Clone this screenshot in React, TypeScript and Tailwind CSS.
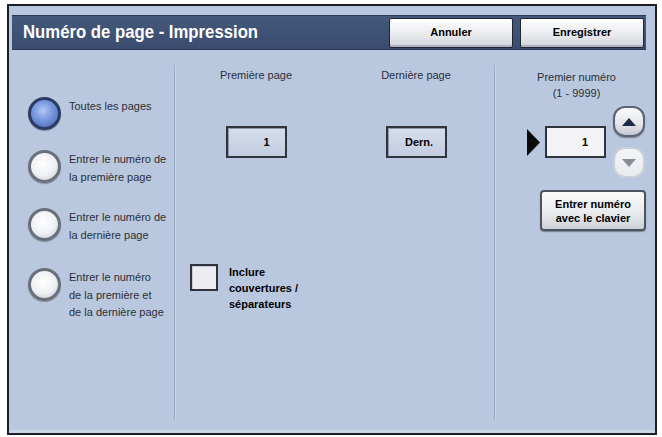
const sans = "font-['Liberation_Sans',Arial,sans-serif]";

function Radio({ on }: { on?: boolean }) {
  return (
    <div
      className={`h-[33px] w-[33px] shrink-0 rounded-full border-[3px] shadow-[0_1px_1px_rgba(0,0,0,0.3)] ${
        on
          ? 'border-[#2b3b63] bg-[radial-gradient(circle_at_45%_40%,#b3c7f3_0%,#7595de_45%,#4562ad_100%)]'
          : 'border-[#6a707b] bg-[radial-gradient(circle_at_45%_40%,#ffffff_0%,#eef0f3_55%,#b8bdc6_100%)]'
      }`}
    />
  );
}

function Option({ on, lines, mt }: { on?: boolean; lines: string[]; mt: string }) {
  return (
    <div className={`flex items-start gap-[8px] ${mt}`}>
      <Radio on={on} />
      <div className="pt-[1px] text-[11px] leading-[17.5px] text-[#2b2f38]">
        {lines.map((l) => (
          <div key={l}>{l}</div>
        ))}
      </div>
    </div>
  );
}

function Field({ value, center }: { value: string; center?: boolean }) {
  return (
    <div
      className={`flex h-[32px] w-[61px] items-center border-2 border-[#30343d] bg-[linear-gradient(180deg,#d6deeb,#c3cde0)] shadow-[inset_1px_1px_0_#8e99ad] text-[11px] font-bold text-black ${
        center ? 'justify-center pl-[6px]' : 'justify-end pr-[15px]'
      }`}
    >
      {value}
    </div>
  );
}

function Divider() {
  return (
    <div className="mt-[15px] mb-[11px] flex w-[2px] shrink-0">
      <div className="w-px bg-[#9aaac3]" />
      <div className="w-px bg-[#cbd6e6]" />
    </div>
  );
}

function HeaderButton({ label }: { label: string }) {
  return (
    <div className="flex h-[30px] w-[124px] items-center justify-center rounded-[2px] border border-[#1f2534] bg-[linear-gradient(180deg,#ffffff,#e6e8ec_60%,#cfd3da)] shadow-[inset_0_-2px_0_#aeb4bf] text-[11px] font-bold text-black">
      {label}
    </div>
  );
}

export default function App() {
  return (
    <div className={`h-[437px] w-[662px] bg-white pl-[7px] pt-[4px] ${sans}`}>
      <div className="flex h-[431px] w-[650px] flex-col border-2 border-[#1b1e25] bg-[#b9c8de]">
        {/* title bar */}
        <div className="ml-[3px] mr-[9px] mt-[9px] flex h-[35px] items-center border-y border-[#2c3a55] bg-[linear-gradient(180deg,#44587a,#3a4d6e)] pl-[11px] pr-[2px]">
          <div className="flex-1">
            <div className="origin-left scale-x-[0.88] whitespace-nowrap text-[19px] font-bold text-white">
              Numéro de page - Impression
            </div>
          </div>
          <div className="flex gap-[7px]">
            <HeaderButton label="Annuler" />
            <HeaderButton label="Enregistrer" />
          </div>
        </div>

        {/* body */}
        <div className="flex flex-1 border-b-[3px] border-[#cad5e6]">
          {/* left column: radios */}
          <div className="w-[165px] shrink-0 pl-[19px]">
            <Option on lines={['Toutes les pages']} mt="mt-[47px]" />
            <Option lines={['Entrer le numéro de', 'la première page']} mt="mt-[20px]" />
            <Option lines={['Entrer le numéro de', 'la dernière page']} mt="mt-[22px]" />
            <Option
              lines={['Entrer le numéro', 'de la première et', 'de la dernière page']}
              mt="mt-[24px]"
            />
          </div>

          <Divider />

          {/* middle column */}
          <div className="w-[318px] shrink-0">
            <div className="flex pt-[19px]">
              <div className="flex w-[160px] shrink-0 flex-col items-center">
                <div className="text-[11px] leading-[13px] text-[#2b2f38]">Première page</div>
                <div className="mt-[44px]">
                  <Field value="1" />
                </div>
              </div>
              <div className="flex w-[160px] shrink-0 flex-col items-center">
                <div className="text-[11px] leading-[13px] text-[#2b2f38]">Dernière page</div>
                <div className="mt-[44px]">
                  <Field value="Dern." center />
                </div>
              </div>
            </div>
            <div className="ml-[14px] mt-[106px] flex items-start gap-[11px]">
              <div className="h-[27px] w-[28px] shrink-0 border-2 border-[#2d323c] bg-[#ececf1] shadow-[inset_1px_1px_0_#c9ccd4]" />
              <div className="text-[11px] font-bold leading-[16px] text-black">
                <div>Inclure</div>
                <div>couvertures /</div>
                <div>séparateurs</div>
              </div>
            </div>
          </div>

          <Divider />

          {/* right column */}
          <div className="flex-1">
            <div className="pl-[2px] pt-[19px] text-center text-[11px] leading-[16px] text-[#2b2f38]">
              <div>Premier numéro</div>
              <div>(1 - 9999)</div>
            </div>
            <div className="mt-[5px] flex items-center pl-[31px]">
              <svg width="13" height="27" viewBox="0 0 13 27" className="shrink-0">
                <polygon points="0,0 13,13.5 0,27" fill="#0b0b0d" />
              </svg>
              <div className="ml-[5px] flex h-[32px] w-[61px] shrink-0 items-center justify-end border-2 border-[#30343d] bg-[#f3f3f6] pr-[16px] text-[11px] font-bold text-black">
                1
              </div>
              <div className="ml-[7px] flex flex-col gap-[10px]">
                <div className="flex h-[31px] w-[32px] items-center justify-center rounded-[12px] border-2 border-[#5c6372] bg-[linear-gradient(180deg,#fbfbfc,#e4e6ea_60%,#c3c7cf)] shadow-[0_1px_1px_rgba(0,0,0,0.35)]">
                  <svg width="14" height="8" viewBox="0 0 14 8">
                    <polygon points="7,0 14,8 0,8" fill="#1e2a47" />
                  </svg>
                </div>
                <div className="flex h-[31px] w-[32px] items-center justify-center rounded-[12px] border-2 border-[#c9cfd9] bg-[linear-gradient(180deg,#f4f5f7,#e8eaee)]">
                  <svg width="14" height="8" viewBox="0 0 14 8">
                    <polygon points="0,0 14,0 7,8" fill="#8a8e98" />
                  </svg>
                </div>
              </div>
            </div>
            <div className="ml-[44px] mt-[12px] flex h-[41px] w-[106px] flex-col items-center justify-center rounded-[4px] border-2 border-[#4d535f] bg-[linear-gradient(180deg,#fafafb,#e7e9ec_60%,#cdd1d8)] shadow-[0_1px_1px_rgba(0,0,0,0.35)] text-[11px] font-bold leading-[14px] text-black">
              <div>Entrer numéro</div>
              <div>avec le clavier</div>
            </div>
          </div>
        </div>
      </div>
    </div>
  );
}
